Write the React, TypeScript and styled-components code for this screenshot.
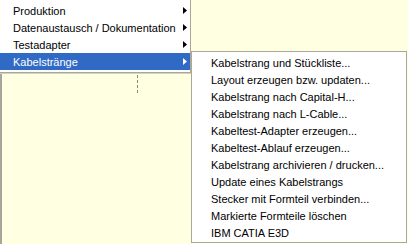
import React from "react";
import styled, { createGlobalStyle } from "styled-components";

const Global = createGlobalStyle`
  html, body { margin: 0; padding: 0; background: #ffffff; }
  body { font-family: "Liberation Sans", Arial, sans-serif; }
`;

const Screen = styled.div`
  position: relative;
  width: 408px;
  height: 244px;
  overflow: hidden;
  background: #ffffe1;
`;

const Workspace = styled.div`
  position: absolute;
  inset: 0;
  border-left: 2px solid #a6a59c;
  box-sizing: border-box;
`;

const DashMark = styled.div`
  position: absolute;
  left: 135px;
  top: 75px;
  height: 18px;
  border-left: 1px dashed #8a8a80;
`;

const Menu = styled.div<{ $left: number; $top: number; $width: number }>`
  position: absolute;
  left: ${(p) => p.$left}px;
  top: ${(p) => p.$top}px;
  width: ${(p) => p.$width}px;
  box-sizing: border-box;
  background: #ffffff;
  border: 1px solid #aca899;
  display: flex;
  flex-direction: column;
  font-family: "Liberation Sans", Arial, sans-serif;
  font-size: 11px;
  color: #000000;
`;

const MainMenu = styled(Menu)`
  padding: 3px 0 2px 0;
  box-shadow: 0 1px 0 #d4d0c4;
`;

const SubMenu = styled(Menu)`
  padding: 2px 0 1px 0;
`;

const Item = styled.div<{ $active?: boolean; $indent: number }>`
  display: flex;
  align-items: center;
  height: 17px;
  padding-left: ${(p) => p.$indent}px;
  padding-right: 3px;
  background: ${(p) => (p.$active ? "#316ac5" : "transparent")};
  color: ${(p) => (p.$active ? "#ffffff" : "#000000")};
  white-space: nowrap;
`;

const Label = styled.span`
  flex: 1;
`;

const Arrow = styled.svg`
  width: 4px;
  height: 7px;
  flex: none;
`;

const mainItems = [
  "Produktion",
  "Datenaustausch / Dokumentation",
  "Testadapter",
  "Kabelstränge",
];

const subItems = [
  "Kabelstrang und Stückliste...",
  "Layout erzeugen bzw. updaten...",
  "Kabelstrang nach Capital-H...",
  "Kabelstrang nach L-Cable...",
  "Kabeltest-Adapter erzeugen...",
  "Kabeltest-Ablauf erzeugen...",
  "Kabelstrang archivieren / drucken...",
  "Update eines Kabelstrangs",
  "Stecker mit Formteil verbinden...",
  "Markierte Formteile löschen",
  "IBM CATIA E3D",
];

export default function App() {
  return (
    <>
      <Global />
      <Screen>
        <Workspace>
          <DashMark />
        </Workspace>
        <MainMenu $left={-1} $top={-2} $width={192}>
          {mainItems.map((t, i) => {
            const active = i === mainItems.length - 1;
            return (
              <Item key={t} $active={active} $indent={13}>
                <Label>{t}</Label>
                <Arrow viewBox="0 0 4 7">
                  <path d="M0 0 L4 3.5 L0 7 Z" fill={active ? "#ffffff" : "#000000"} />
                </Arrow>
              </Item>
            );
          })}
        </MainMenu>
        <SubMenu $left={191} $top={51} $width={216}>
          {subItems.map((t) => (
            <Item key={t} $indent={19}>
              <Label>{t}</Label>
            </Item>
          ))}
        </SubMenu>
      </Screen>
    </>
  );
}
